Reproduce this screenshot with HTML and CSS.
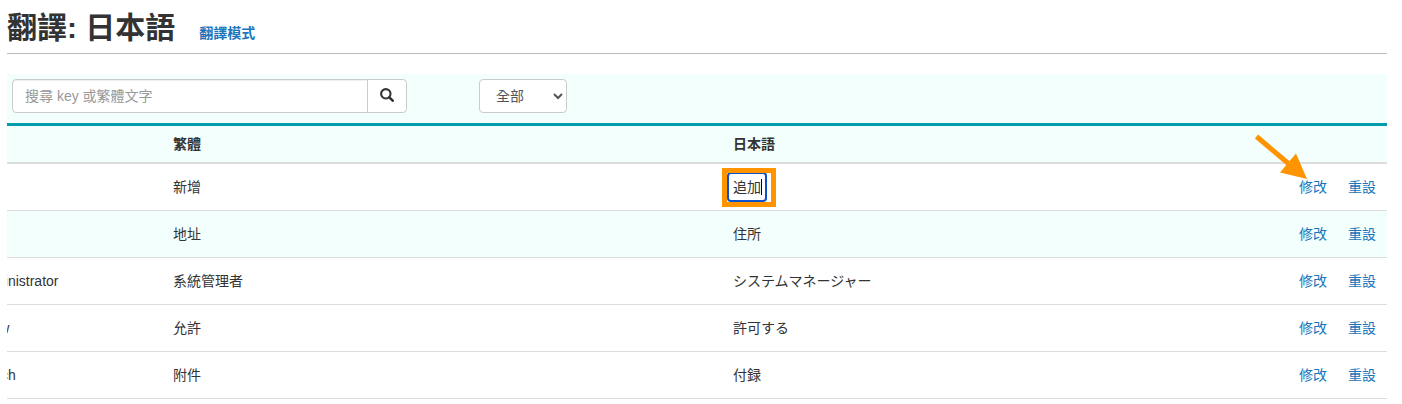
FILE: index.html
```html
<!DOCTYPE html>
<html lang="zh-Hant">
<head>
<meta charset="utf-8">
<title>翻譯: 日本語</title>
<link rel="stylesheet" href="styles.css">
</head>
<body>
<main class="page">
  <header class="page-header">
    <h1 class="page-title">翻譯: 日本語</h1>
    <a class="mode-link" href="#">翻譯模式</a>
  </header>

  <form class="filters">
    <div class="search">
      <input class="search-input" type="text" placeholder="搜尋 key 或繁體文字" aria-label="搜尋 key 或繁體文字">
      <button class="search-button" type="button" aria-label="搜尋">
        <svg width="14" height="14" viewBox="0 0 14 14" aria-hidden="true">
          <circle cx="5.8" cy="5.8" r="4.7" fill="none" stroke="#333" stroke-width="2.1"/>
          <path d="M9.300 9.300 12.700 12.700" stroke="#333" stroke-width="2.6" stroke-linecap="round"/>
        </svg>
      </button>
    </div>
    <select class="scope" aria-label="範圍">
      <option>全部</option>
    </select>
  </form>

  <div class="table-scroll">
    <table class="translations">
      <thead>
        <tr><th class="col-key"></th><th>繁體</th><th lang="ja">日本語</th><th class="col-actions"></th></tr>
      </thead>
      <tbody>
        <tr>
          <td></td><td>新增</td>
          <td class="edit-cell" lang="ja">
            <div class="editor"><input class="edit-input" type="text" value="追加" aria-label="日本語"><span class="caret"></span><span class="highlight"></span></div>
          </td>
          <td class="actions">
            <div class="links"><a href="#">修改</a><a href="#">重設</a></div>
            <svg class="arrow" width="54" height="46" viewBox="0 0 54 46" aria-hidden="true">
              <path d="M2.500 2.500 35 30" stroke="#ff9300" stroke-width="5"/>
              <path d="M53 45 42 19.500 26 38.500Z" fill="#ff9300"/>
            </svg>
          </td>
        </tr>
        <tr class="shaded"><td></td><td>地址</td><td lang="ja">住所</td><td class="actions"><div class="links"><a href="#">修改</a><a href="#">重設</a></div></td></tr>
        <tr><td>Administrator</td><td>系統管理者</td><td lang="ja">システムマネージャー</td><td class="actions"><div class="links"><a href="#">修改</a><a href="#">重設</a></div></td></tr>
        <tr><td>Allow</td><td>允許</td><td lang="ja">許可する</td><td class="actions"><div class="links"><a href="#">修改</a><a href="#">重設</a></div></td></tr>
        <tr><td>Attach</td><td>附件</td><td lang="ja">付録</td><td class="actions"><div class="links"><a href="#">修改</a><a href="#">重設</a></div></td></tr>
      </tbody>
    </table>
  </div>
</main>
</body>
</html>
```
FILE: styles.css
```css
* { box-sizing: border-box; }

body {
  margin: 0;
  background: #fff;
  color: #333;
  font: 14px/20px "Liberation Sans", "Noto Sans CJK TC", sans-serif;
}

a { color: #1a75bb; text-decoration: none; }

.page { margin: 0 15px 0 7px; }

.page-header {
  display: flex;
  align-items: baseline;
  gap: 24px;
  padding: 11px 0 9px;
  border-bottom: 1px solid #bbb;
}

.page-title {
  margin: 0;
  font-size: 30px;
  line-height: 33px;
}

.mode-link { font-weight: bold; }

.filters {
  display: flex;
  gap: 72px;
  margin-top: 20px;
  padding: 5px 5px 10px;
  background: #f3fffc;
  border-bottom: 3px solid #009cae;
}

.search { display: flex; }

.search-input,
.search-button,
.scope {
  height: 34px;
  border: 1px solid #ccc;
  background: #fff;
  color: #555;
  font: inherit;
}

.search-input {
  width: 356px;
  padding: 6px 12px;
  border-radius: 4px 0 0 4px;
  box-shadow: inset 0 1px 1px #0001;
}

.search-input::placeholder { color: #999; opacity: 1; }

.search-button {
  width: 40px;
  margin-left: -1px;
  padding: 0;
  border-radius: 0 4px 4px 0;
}

.search-button svg { display: inline-block; vertical-align: -1px; }

.scope {
  width: 88px;
  padding: 0 0 0 12px;
  border-radius: 4px;
}

.table-scroll { overflow: hidden; }

/* Scrolled so that the start of the key column is out of view. */
.translations {
  width: calc(100% + 39px);
  margin-left: -39px;
  table-layout: fixed;
  border-collapse: separate;
  border-spacing: 0;
}

.translations th {
  padding: 8px;
  text-align: left;
  background: #f3fffc;
  border-bottom: 2px solid #ddd;
}

.translations td {
  padding: 13px 8px;
  border-bottom: 1px solid #ddd;
}

.shaded { background: #f3fffd; }

.col-key { width: 197px; }
.col-actions { width: 102px; }

.translations .actions {
  position: relative;
  padding-right: 11px;
}

.links {
  display: flex;
  justify-content: flex-end;
  gap: 21px;
}

.translations .edit-cell { padding: 8px 2px; }

.editor {
  position: relative;
  width: 40px;
}

.edit-input {
  display: block;
  width: 100%;
  height: 30px;
  padding: 0 0 2px 4px;
  border: 2px solid #0b52cc;
  border-radius: 4px;
  background: #fff;
  color: #333;
  font: inherit;
}

.caret {
  position: absolute;
  top: 7px;
  right: 5px;
  width: 1px;
  height: 16px;
  background: #000;
}

.highlight {
  position: absolute;
  top: -4px;
  left: -5px;
  width: 54px;
  height: 39px;
  border: 5px solid #ff9300;
}

.arrow {
  position: absolute;
  top: -30px;
  right: 79px;
}
```
